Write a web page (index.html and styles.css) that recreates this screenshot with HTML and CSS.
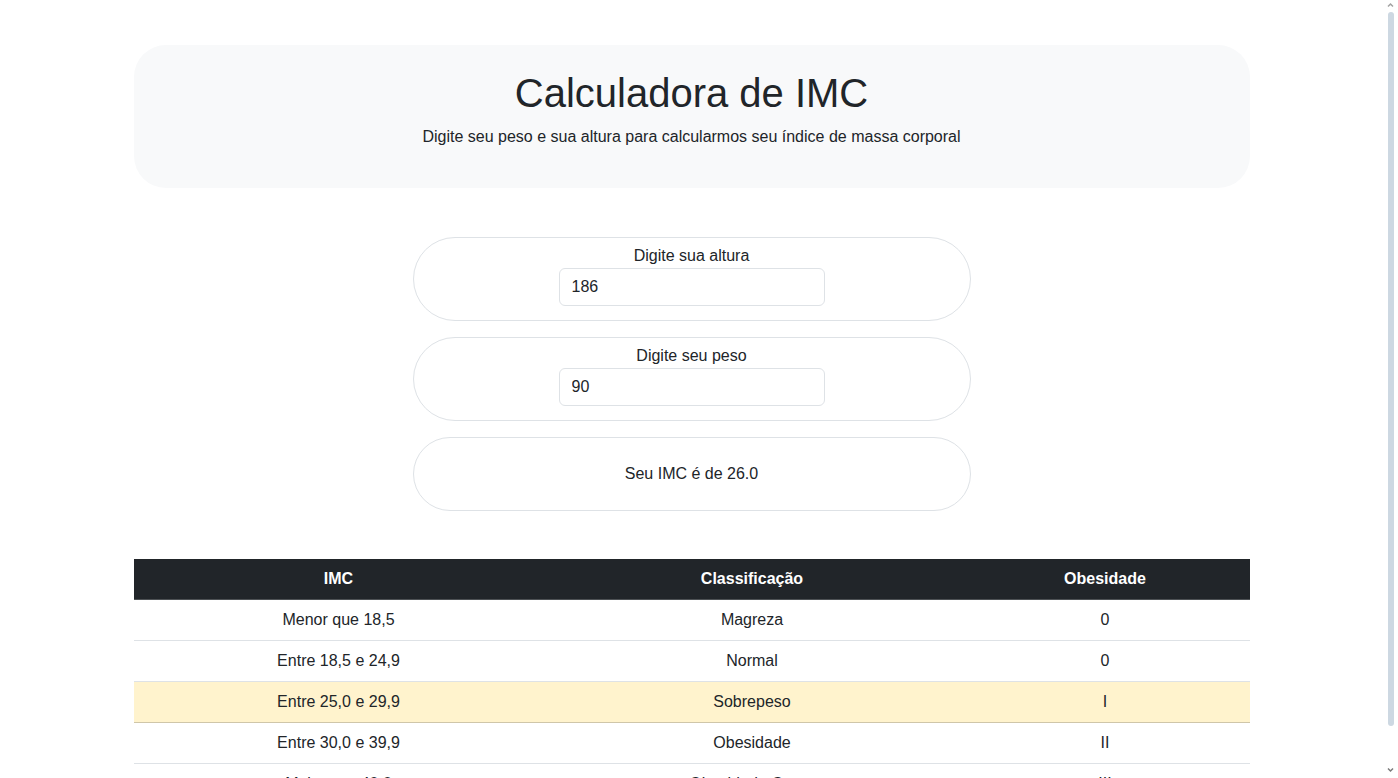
FILE: index.html
```html
<!DOCTYPE html>
<html lang="pt-BR">
<head>
<meta charset="utf-8">
<title>Calculadora de IMC</title>
<link rel="stylesheet" href="styles.css">
</head>
<body>
<div class="container">
  <header class="hero">
    <h1 class="hero-title">Calculadora de IMC</h1>
    <p class="hero-text">Digite seu peso e sua altura para calcularmos seu índice de massa corporal</p>
  </header>

  <section class="form-area">
    <div class="field-box">
      <label class="field-label" for="altura">Digite sua altura</label>
      <input class="field-input" id="altura" type="text" value="186">
    </div>
    <div class="field-box">
      <label class="field-label" for="peso">Digite seu peso</label>
      <input class="field-input" id="peso" type="text" value="90">
    </div>
    <div class="field-box result-box">
      <p class="result-text">Seu IMC é de 26.0</p>
    </div>
  </section>

  <table class="imc-table">
    <colgroup>
      <col class="col-imc">
      <col class="col-class">
      <col class="col-ob">
    </colgroup>
    <thead>
      <tr>
        <th>IMC</th>
        <th>Classificação</th>
        <th>Obesidade</th>
      </tr>
    </thead>
    <tbody>
      <tr><td>Menor que 18,5</td><td>Magreza</td><td>0</td></tr>
      <tr><td>Entre 18,5 e 24,9</td><td>Normal</td><td>0</td></tr>
      <tr class="row-warning"><td>Entre 25,0 e 29,9</td><td>Sobrepeso</td><td>I</td></tr>
      <tr><td>Entre 30,0 e 39,9</td><td>Obesidade</td><td>II</td></tr>
      <tr><td>Maior que 40,0</td><td>Obesidade Grave</td><td>III</td></tr>
    </tbody>
  </table>
</div>

<div class="fake-scrollbar" aria-hidden="true">
  <svg class="sb-arrow sb-up" width="15" height="10" viewBox="0 0 15 10">
    <path d="M5 6.5 L7.5 4 L10 6.5" fill="none" stroke="#a3a3a3" stroke-width="1.5"/>
  </svg>
  <div class="sb-thumb"></div>
  <svg class="sb-arrow sb-down" width="15" height="10" viewBox="0 0 15 10">
    <path d="M5 3.5 L7.5 6 L10 3.5" fill="none" stroke="#7a7a7a" stroke-width="1.5"/>
  </svg>
</div>
</body>
</html>
```

FILE: styles.css
```css
* {
  box-sizing: border-box;
}

html, body {
  margin: 0;
  padding: 0;
}

html {
  overflow: hidden;
}

body {
  font-family: "Liberation Sans", Arial, sans-serif;
  font-size: 16px;
  line-height: 1.5;
  color: #212529;
  background: #ffffff;
  padding-right: 15px;
}

.container {
  width: 1116px;
  margin: 0 auto;
  padding-bottom: 48px;
}

.hero {
  margin-top: 45px;
  background: #f8f9fa;
  border-radius: 32px;
  padding: 24px 24px 23px;
  text-align: center;
}

.hero-title {
  margin: 0 0 8px;
  font-size: 40px;
  font-weight: 500;
  line-height: 1.2;
}

.hero-text {
  margin: 0 0 16px;
}

.form-area {
  margin-top: 49px;
  display: flex;
  flex-direction: column;
  align-items: center;
  gap: 16px;
}

.field-box {
  width: 558px;
  height: 84px;
  border: 1px solid #dee2e6;
  border-radius: 42px;
  padding: 6px 0 0;
  display: flex;
  flex-direction: column;
  align-items: center;
}

.field-label {
  display: block;
  line-height: 24px;
}

.field-input {
  width: 266px;
  height: 38px;
  padding: 6px 12px;
  font-family: inherit;
  font-size: 16px;
  line-height: 24px;
  color: #212529;
  background: #ffffff;
  border: 1px solid #dee2e6;
  border-radius: 6px;
  outline: none;
}

.result-box {
  height: 74px;
  padding: 0;
  justify-content: center;
}

.result-text {
  margin: 0;
}

.imc-table {
  margin-top: 48px;
  width: 100%;
  border-collapse: collapse;
  table-layout: fixed;
}

.col-imc { width: 410px; }
.col-class { width: 417px; }
.col-ob { width: 289px; }

.imc-table th,
.imc-table td {
  padding: 8px;
  text-align: center;
  line-height: 24px;
  border-bottom: 1px solid #dee2e6;
}

.imc-table th {
  background: #212529;
  color: #ffffff;
  font-weight: 700;
  border-bottom-color: #4d5154;
}

.row-warning td {
  background: #fff3cd;
  border-bottom-color: #cfc6a9;
}

.fake-scrollbar {
  position: fixed;
  top: 0;
  right: 0;
  width: 15px;
  height: 100vh;
  background: #ffffff;
}

.sb-arrow {
  position: absolute;
  left: 0;
  display: block;
}

.sb-up {
  top: 0;
}

.sb-down {
  bottom: 3px;
}

.sb-thumb {
  position: absolute;
  top: 12px;
  left: 5px;
  width: 6px;
  height: 714px;
  border-radius: 3px;
  background: #cdd8e2;
}
```
